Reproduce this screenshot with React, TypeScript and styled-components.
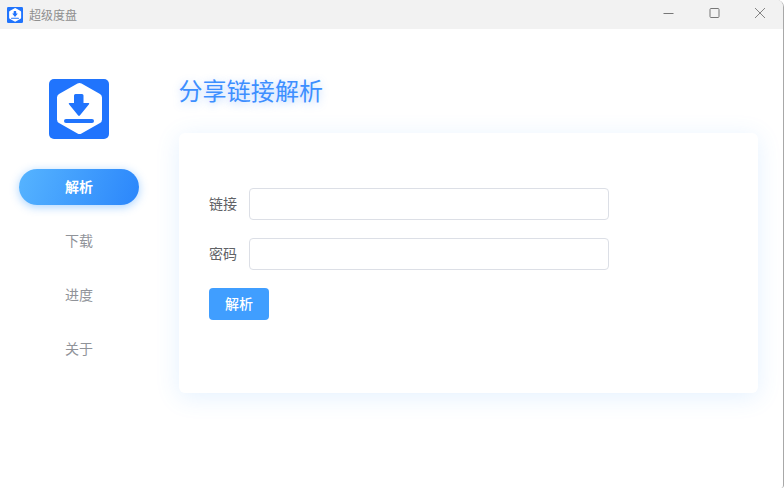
import React from "react";
import styled, { createGlobalStyle } from "styled-components";

const Global = createGlobalStyle`
  html, body { margin: 0; padding: 0; background: #fff; }
  body { font-family: "Noto Sans CJK SC", "Liberation Sans", sans-serif; }
  * { box-sizing: border-box; }
`;

const Window = styled.div`
  width: 784px;
  height: 488px;
  display: flex;
  flex-direction: column;
  background: #fff;
  border-right: 1px solid #a8a8a8;
  border-top-right-radius: 7px;
  border-bottom-right-radius: 3px;
  overflow: hidden;
`;

const TitleBar = styled.div`
  height: 29px;
  flex: none;
  display: flex;
  align-items: center;
  background: #f2f2f2;
  padding-left: 7px;
`;

const TitleText = styled.span`
  margin-left: 6px;
  font-size: 12px;
  line-height: 16px;
  color: #8f8f8f;
`;

const Controls = styled.div`
  margin-left: auto;
  align-self: flex-start;
  display: flex;
  align-items: center;
  padding-right: 1px;
`;

const ControlButton = styled.div`
  width: 45px;
  height: 26px;
  display: flex;
  align-items: center;
  justify-content: center;
  color: #777;
`;

const MinimizeIcon = styled.svg`
  margin-left: -1px;
`;

const LogoMark = styled.svg`
  flex: none;
  display: block;
`;

const Body = styled.div`
  flex: 1;
  display: flex;
  min-height: 0;
`;

const Sidebar = styled.nav`
  width: 179px;
  flex: none;
  display: flex;
  flex-direction: column;
  padding: 50px 0 0 19px;
`;

const LogoWrap = styled.div`
  width: 120px;
  height: 60px;
  display: flex;
  justify-content: center;
  margin-bottom: 30px;
`;

const NavItem = styled.div<{ $active?: boolean }>`
  width: 120px;
  height: 36px;
  margin-bottom: 18px;
  padding-bottom: 2px;
  border-radius: 18px;
  display: flex;
  align-items: center;
  justify-content: center;
  font-size: 14px;
  font-weight: ${(p) => (p.$active ? 700 : 400)};
  color: ${(p) => (p.$active ? "#fff" : "#909399")};
  background: ${(p) => (p.$active ? "linear-gradient(110deg, #56b4ff, #2b86fb)" : "transparent")};
  box-shadow: ${(p) => (p.$active ? "0 2px 10px rgba(64, 158, 255, 0.45)" : "none")};
`;

const Main = styled.main`
  flex: 1;
  display: flex;
  flex-direction: column;
  padding-top: 43px;
`;

const Heading = styled.h1`
  margin: 0 0 25px;
  height: 36px;
  font-size: 24px;
  line-height: 36px;
  font-weight: 400;
  letter-spacing: 0.1px;
  text-indent: -0.5px;
  color: #3d8fff;
  text-shadow: 0 2px 8px rgba(64, 140, 255, 0.4);
`;

const Card = styled.section`
  width: 579px;
  height: 260px;
  padding: 55px 30px 0;
  background: #fff;
  border-radius: 6px;
  box-shadow: 0 4px 24px rgba(64, 158, 255, 0.14);
`;

const Field = styled.div`
  display: flex;
  align-items: center;
  margin-bottom: 18px;
`;

const Label = styled.label`
  width: 40px;
  height: 32px;
  font-size: 14px;
  line-height: 30px;
  color: #606266;
`;

const Input = styled.input`
  width: 360px;
  height: 32px;
  padding: 0 12px;
  background: #fff;
  border: 1px solid #dcdfe6;
  border-radius: 4px;
  outline: none;
`;

const Submit = styled.button`
  width: 60px;
  height: 32px;
  padding: 0 0 2px;
  border: none;
  border-radius: 4px;
  background: #409eff;
  color: #fff;
  font-family: inherit;
  font-size: 14px;
  font-weight: 500;
`;

const Logo = ({ size }: { size: number }) => (
  <LogoMark width={size} height={size} viewBox="0 0 60 60">
    <rect width="60" height="60" rx="5" fill="#2074fd" />
    <path
      d="M30.5 4 Q31.5 4 32.5 4.6 L51 15 Q53 16.1 53 18.5 V40.5 Q53 42.9 51 44 L32.5 54.4 Q30.5 55.4 28.5 54.4 L10 44 Q8 42.9 8 40.5 V18.5 Q8 16.1 10 15 L28.5 4.6 Q29.5 4 30.5 4 Z"
      fill="#fff"
    />
    <path
      d="M26.5 15 H33 Q34.5 15 34.5 16.5 V24 H39.5 Q40.8 24 40 25.2 L30.8 36.6 Q30 37.4 29.2 36.6 L20 25.2 Q19.2 24 20.5 24 H25 V16.5 Q25 15 26.5 15 Z"
      fill="#2074fd"
    />
    <rect x="15" y="40" width="30" height="4" rx="2" fill="#2074fd" />
  </LogoMark>
);

export default function App() {
  return (
    <>
      <Global />
      <Window>
        <TitleBar>
          <Logo size={16} />
          <TitleText>超级度盘</TitleText>
          <Controls>
            <ControlButton>
              <MinimizeIcon width="12" height="12" viewBox="0 0 12 12">
                <path d="M0.5 6.5H10.5" stroke="currentColor" fill="none" />
              </MinimizeIcon>
            </ControlButton>
            <ControlButton>
              <svg width="12" height="12" viewBox="0 0 12 12">
                <rect x="1" y="1.5" width="9" height="9" rx="1" stroke="currentColor" fill="none" />
              </svg>
            </ControlButton>
            <ControlButton>
              <svg width="12" height="12" viewBox="0 0 12 12">
                <path d="M1 1L11 11M11 1L1 11" stroke="currentColor" strokeWidth="0.9" fill="none" />
              </svg>
            </ControlButton>
          </Controls>
        </TitleBar>
        <Body>
          <Sidebar>
            <LogoWrap>
              <Logo size={60} />
            </LogoWrap>
            <NavItem $active>解析</NavItem>
            <NavItem>下载</NavItem>
            <NavItem>进度</NavItem>
            <NavItem>关于</NavItem>
          </Sidebar>
          <Main>
            <Heading>分享链接解析</Heading>
            <Card>
              <Field>
                <Label>链接</Label>
                <Input />
              </Field>
              <Field>
                <Label>密码</Label>
                <Input />
              </Field>
              <Submit>解析</Submit>
            </Card>
          </Main>
        </Body>
      </Window>
    </>
  );
}
